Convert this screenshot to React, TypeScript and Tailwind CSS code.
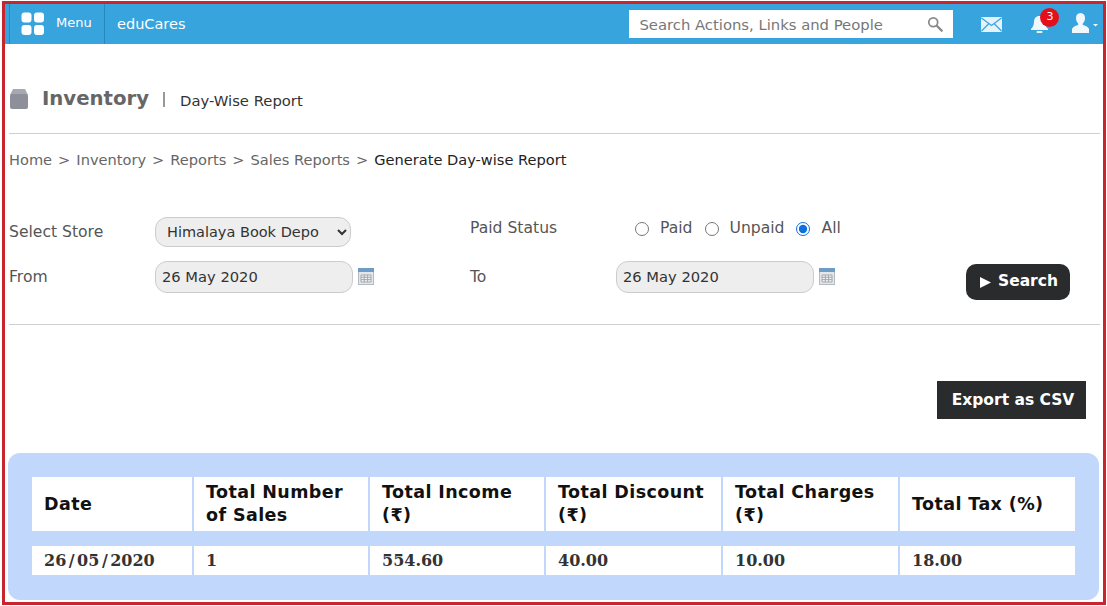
const headers = [
  ["Date"],
  ["Total Number", "of Sales"],
  ["Total Income", "(₹)"],
  ["Total Discount", "(₹)"],
  ["Total Charges", "(₹)"],
  ["Total Tax (%)"],
];
const values = ["26/05/2020", "1", "554.60", "40.00", "10.00", "18.00"];

function CalendarIcon() {
  return (
    <svg width="16" height="17" viewBox="0 0 16 17" className="shrink-0">
      <rect x="0.5" y="0.5" width="15" height="16" fill="#e4e6e9" stroke="#b4bac2" />
      <rect x="0" y="0" width="16" height="4" fill="#6f9cc7" />
      <path d="M3 7h10v7H3zM3 9.3h10M3 11.6h10M6.3 7v7M9.6 7v7" fill="#f3f4f6" stroke="#a2a8b0" strokeWidth="1" />
    </svg>
  );
}

function DateField({ value }: { value: string }) {
  return (
    <div className="flex items-start">
      <div className="flex h-[32px] w-[198px] items-center rounded-[12px] border border-[#cccccc] bg-[#eeeeee] pl-[6px] text-[14.7px] text-[#333333]">
        {value}
      </div>
      <div className="ml-[5px] mt-[7px]">
        <CalendarIcon />
      </div>
    </div>
  );
}

function Radio({ label, checked }: { label: string; checked?: boolean }) {
  return (
    <label className="flex items-center">
      <input type="radio" name="paid" defaultChecked={checked} className="m-0 h-[14px] w-[14px] accent-[#0f6fe0]" />
      <span className="ml-[11px]">{label}</span>
    </label>
  );
}

export default function App() {
  return (
    <div className="h-[606px] w-[1107px] overflow-hidden bg-white pl-[2px] pt-[1px] font-['DejaVu_Sans',sans-serif] text-[15.6px] text-[#555555]">
      <div className="h-[604px] w-[1104px] border-[3px] border-[#c9252f]">
        <header className="flex h-[40px] items-center bg-[#38a4dd] text-white">
          <div className="ml-[4px] flex h-[40px] w-[96px] items-center border-x border-[#2a86bb] pl-[11px]">
            <svg width="24" height="24" viewBox="0 0 24 24" fill="#ffffff">
              <rect x="0.5" y="0.5" width="10" height="10" rx="3" />
              <rect x="13" y="0.5" width="10" height="10" rx="3" />
              <rect x="0.5" y="13" width="10" height="10" rx="3" />
              <rect x="13" y="13" width="10" height="10" rx="3" />
            </svg>
            <span className="mb-[3px] ml-[11px] text-[13px]">Menu</span>
          </div>
          <span className="ml-[12px] mt-[1px] text-[14.5px]">eduCares</span>
          <div className="ml-[444px] flex h-[28px] w-[324px] items-center justify-between bg-white pl-[10px] pr-[10px] text-[#777777]">
            <span className="pt-[2px] text-[14.8px]">Search Actions, Links and People</span>
            <svg width="16" height="16" viewBox="0 0 18 18" fill="none" stroke="#8a8a8a" strokeWidth="2">
              <circle cx="7" cy="7" r="5" />
              <path d="M11 11l5.500 5.500" strokeLinecap="round" strokeWidth="2.600" />
            </svg>
          </div>
          <svg width="21" height="15" viewBox="0 0 21 15" className="ml-[28px]">
            <rect width="21" height="15" rx="1" fill="#e3f2fb" />
            <path d="M0.500 1l10 7.500L20.500 1M0.500 14l7-7M20.500 14l-7-7" fill="none" stroke="#38a4dd" strokeWidth="1.200" />
          </svg>
          <div className="relative ml-[28px] h-[17px] w-[19px]">
            <svg width="19" height="17" viewBox="0 0 19 17" fill="#f0f8fd">
              <path d="M9.500 0C5.800 0 4 2.600 4 6c0 3.400-1.500 5.400-3 7v1h17v-1c-1.500-1.600-3-3.600-3-7 0-3.400-1.800-6-5.500-6z" />
              <rect x="6.500" y="15" width="6" height="2" rx="1" />
            </svg>
            <span className="absolute left-[10px] top-[-8px] flex h-[19px] w-[19px] items-center justify-center rounded-full bg-[#e3101c] text-[11px] text-white">
              3
            </span>
          </div>
          <svg width="26" height="20" viewBox="0 0 26 20" fill="#f0f8fd" className="mb-[2px] ml-[23px]">
            <path d="M8.500 0c3 0 4.500 2.200 4.500 5 0 2.400-.9 4.300-2.200 5.500V12c2.200.7 5.200 1.700 6.200 3.800V20H0v-4.200c1-2.100 4-3.100 6.200-3.800v-1.500C4.900 9.300 4 7.400 4 5c0-2.800 1.500-5 4.500-5z" />
            <path d="M21 11h5l-2.500 2.500z" />
          </svg>
        </header>

        <div className="ml-[5px] mt-[41px] flex h-[30px] items-center">
          <svg width="18" height="20" viewBox="0 0 18 20" className="mb-[3px]">
            <path d="M3 0h12l3 6H0z" fill="#a7a9b2" />
            <rect y="5" width="18" height="15" rx="2" fill="#8d8f9a" />
          </svg>
          <h1 className="mb-[2px] ml-[14px] text-[19.7px] font-bold text-[#666666]">Inventory</h1>
          <div className="mb-[2px] ml-[14px] h-[15px] w-[2px] bg-[#999999]" />
          <span className="ml-[15px] mt-[2px] text-[14.8px] text-[#333333]">Day-Wise Report</span>
        </div>

        <div className="ml-[4px] mt-[18px] h-px w-[1091px] bg-[#cfcfcf]" />

        <nav className="ml-[4px] mt-[16px] flex h-[20px] items-center gap-[6px] text-[14.6px] text-[#666666]">
          <span>Home</span>
          <span>&gt;</span>
          <span>Inventory</span>
          <span>&gt;</span>
          <span>Reports</span>
          <span>&gt;</span>
          <span>Sales Reports</span>
          <span>&gt;</span>
          <span className="text-[#222222]">Generate Day-wise Report</span>
        </nav>

        <div className="ml-[4px] mt-[47px] flex h-[30px] items-center">
          <span className="mt-[1px] w-[146px]">Select Store</span>
          <select
            defaultValue="Himalaya Book Depo"
            className="h-[30px] w-[196px] rounded-[12px] border border-[#cccccc] bg-[#eeeeee] pl-[7px] text-[14.5px] text-[#333333]"
          >
            <option>Himalaya Book Depo</option>
          </select>
          <span className="mb-[6px] ml-[119px] w-[165px]">Paid Status</span>
          <div className="mb-[6px] flex items-center gap-[12px]">
            <Radio label="Paid" />
            <Radio label="Unpaid" />
            <Radio label="All" checked />
          </div>
        </div>

        <div className="ml-[4px] mt-[14px] flex h-[36px] items-start">
          <span className="mt-[5px] w-[146px]">From</span>
          <DateField value="26 May 2020" />
          <span className="ml-[96px] mt-[5px] w-[146px]">To</span>
          <DateField value="26 May 2020" />
          <button className="ml-[131px] mt-[3px] flex h-[36px] w-[104px] items-center justify-center rounded-[10px] bg-[#2a2b2d] pl-[2px] text-[15.5px] font-bold text-white">
            <svg width="11" height="11" viewBox="0 0 11 11" fill="#ffffff" className="mr-[7px]">
              <path d="M0 0l11 5.500L0 11z" />
            </svg>
            Search
          </button>
        </div>

        <div className="ml-[4px] mt-[27px] h-px w-[1091px] bg-[#cfcfcf]" />

        <div className="mr-[17px] mt-[56px] flex justify-end">
          <button className="h-[38px] w-[149px] bg-[#2a2b2d] pl-[3px] pt-[2px] text-[15.5px] font-bold text-white">Export as CSV</button>
        </div>

        <section className="ml-[3px] mt-[34px] w-[1091px] rounded-[12px] bg-[#c1d7fb] pb-[25px] pl-[24px] pt-[24px]">
          <div className="grid w-[1043px] grid-cols-[160px_174px_174px_175px_175px_175px] gap-x-[2px] gap-y-[15px]">
            {headers.map((lines) => (
              <div key={lines[0]} className="flex h-[54px] flex-col justify-center bg-white pl-[12px] text-[17.5px] font-bold leading-[23px] tracking-[0.4px] text-[#111111]">
                {lines.map((line) => (
                  <span key={line} className="whitespace-nowrap">{line}</span>
                ))}
              </div>
            ))}
            {values.map((value) => (
              <div key={value} className="flex h-[29px] items-center bg-white pl-[12px] font-['DejaVu_Serif',serif] text-[16px] font-bold text-[#333333]">
                {value.split("/").map((part, i) => (
                  <span key={i}>
                    {i > 0 && <span className="mx-[2.5px]">/</span>}
                    {part}
                  </span>
                ))}
              </div>
            ))}
          </div>
        </section>
      </div>
    </div>
  );
}
